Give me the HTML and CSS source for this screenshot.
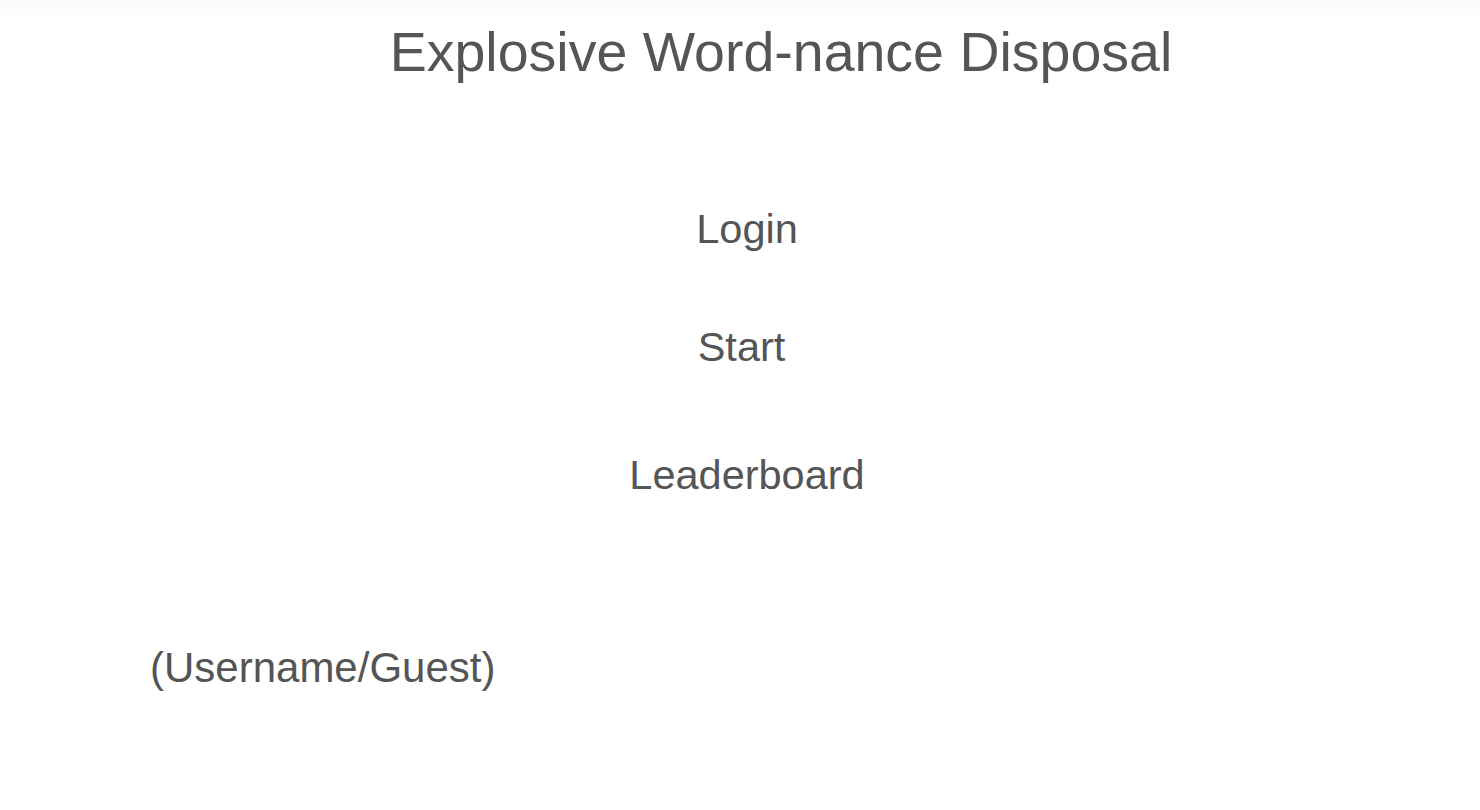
FILE: index.html
```html
<!DOCTYPE html>
<html lang="en">
<head>
<meta charset="utf-8">
<title>Explosive Word-nance Disposal</title>
<link rel="stylesheet" href="styles.css">
</head>
<body>
<div class="page">
  <header class="top">
    <h1 class="title">Explosive Word-nance Disposal</h1>
  </header>
  <nav class="menu">
    <a class="menu-item login" href="#">Login</a>
    <a class="menu-item start" href="#">Start</a>
    <a class="menu-item board" href="#">Leaderboard</a>
  </nav>
  <div class="user">(Username/Guest)</div>
</div>
</body>
</html>
```

FILE: styles.css
```css
html, body {
  margin: 0;
  padding: 0;
  background: #ffffff;
}
.page {
  width: 1480px;
  height: 810px;
  font-family: "Liberation Sans", Arial, sans-serif;
  color: #555555;
  background: linear-gradient(to bottom, #f8f8f8 0px, #ffffff 18px, #ffffff 100%);
  overflow: hidden;
}
.top {
  padding-top: 20px;
  display: flex;
  justify-content: center;
  padding-left: 82px;
}
.title {
  margin: 0;
  font-size: 55.5px;
  font-weight: normal;
  line-height: 64px;
}
.menu {
  display: flex;
  flex-direction: column;
  align-items: center;
  padding-left: 14px;
  margin-top: 121px;
}
.menu-item {
  display: block;
  font-size: 41.5px;
  line-height: 48px;
  color: #555555;
  text-decoration: none;
}
.start {
  margin-top: 70px;
  padding-right: 11px;
}
.board {
  margin-top: 80px;
}
.user {
  margin-top: 145px;
  padding-left: 150px;
  font-size: 42px;
  line-height: 48px;
}
```
